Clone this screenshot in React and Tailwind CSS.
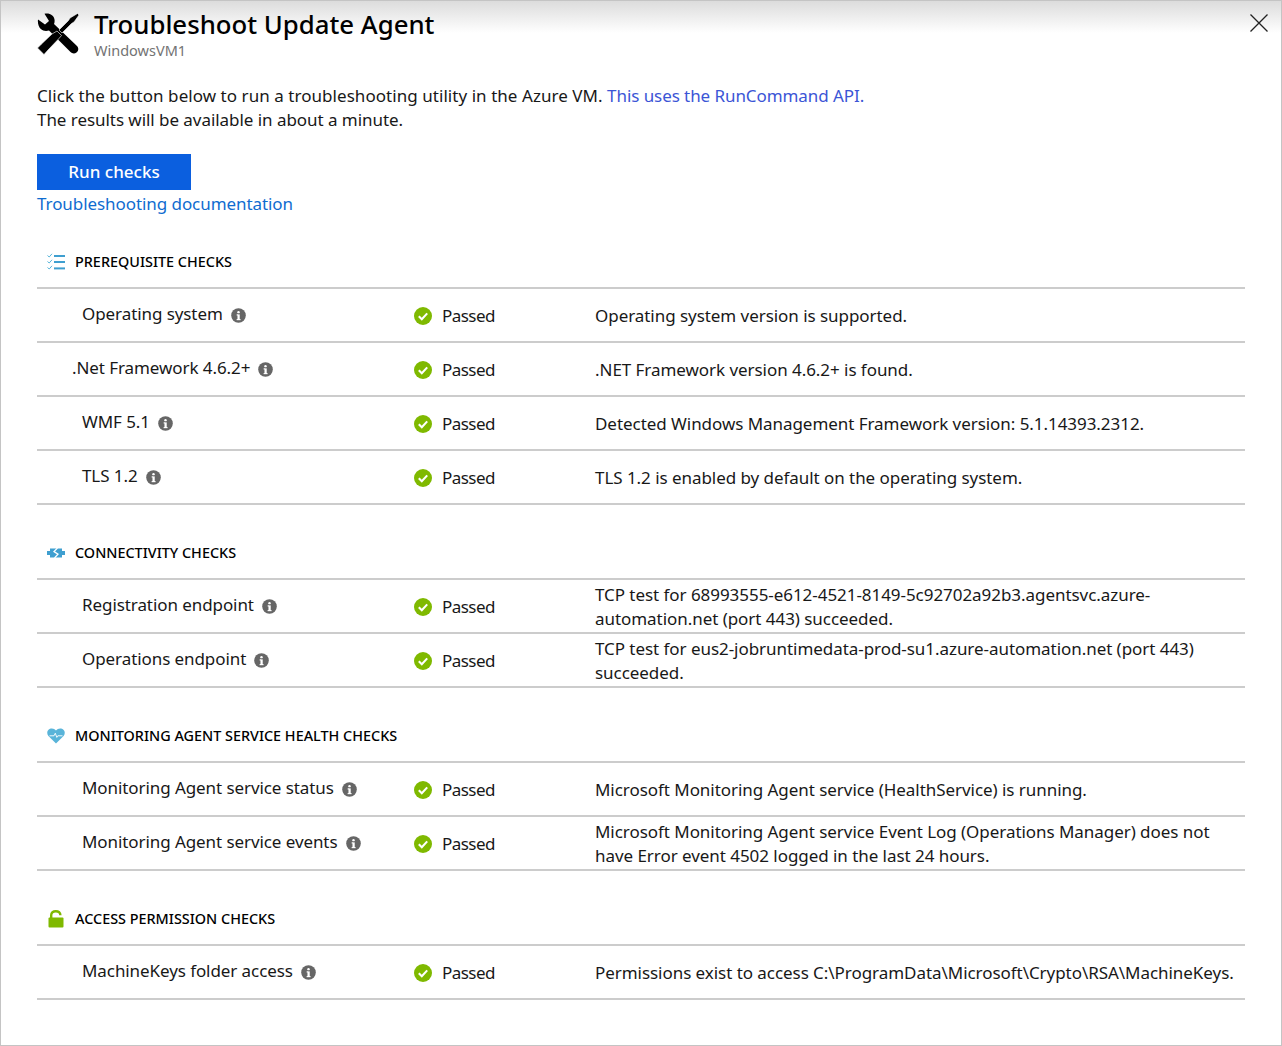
const Info = () => (
  <svg viewBox="0 0 16 16" className="w-[15px] h-[15px] shrink-0 ml-[8px] mt-[2px]">
    <circle cx="8" cy="8" r="7.8" fill="#666" />
    <rect x="6.9" y="6.8" width="2.4" height="6" fill="#fff" />
    <rect x="6" y="6.8" width="1.5" height="1.2" fill="#fff" />
    <rect x="6" y="11.8" width="4.2" height="1.2" fill="#fff" />
    <circle cx="8" cy="4.4" r="1.3" fill="#fff" />
  </svg>
);

const Check = () => (
  <svg viewBox="0 0 18 18" className="w-[18px] h-[18px] shrink-0">
    <circle cx="9" cy="9" r="9" fill="#7fb900" />
    <path d="M4.8 9.3 L7.8 12.2 L13.2 6.4" fill="none" stroke="#fff" strokeWidth="2.1" />
  </svg>
);

const ChecklistIcon = () => (
  <svg viewBox="0 0 18 18" className="w-[18px] h-[18px]">
    <g fill="none" stroke="#59b4d9" strokeWidth="1">
      <path d="M0.5 2.5 L2.2 4 L5 0.8" />
      <path d="M0.5 8.5 L2.2 10 L5 6.8" />
      <path d="M0.5 14.5 L2.2 16 L5 12.8" />
    </g>
    <g fill="#3f9fd0">
      <rect x="7" y="2" width="11" height="2" />
      <rect x="7" y="8" width="11" height="2" />
      <rect x="7" y="14.4" width="11" height="2" />
    </g>
  </svg>
);

const ConnectIcon = () => (
  <svg viewBox="0 0 18 10" className="w-[18px] h-[10px]">
    <path d="M0 3 H3 V0.5 H15 V3 H18 V7 H15 V9.5 H3 V7 H0 Z" fill="#3f9fd0" />
    <path d="M10.5 0 L7 3.6 L11 6.2 L7.5 10" fill="none" stroke="#fff" strokeWidth="1.3" />
  </svg>
);

const HeartIcon = () => (
  <svg viewBox="0 0 18 16" className="w-[18px] h-[16px]">
    <path d="M9 15.5 L1.4 8 C-0.6 5.6 0 1.8 3 0.7 C5.3 -0.1 7.6 0.6 9 2.6 C10.4 0.6 12.7 -0.1 15 0.7 C18 1.8 18.6 5.6 16.6 8 Z" fill="#59b4d9" />
    <path d="M2.5 7.8 H7 L8.3 5.2 L9.8 9.4 L10.8 7.8 H15.5" fill="none" stroke="#fff" strokeWidth="0.9" />
  </svg>
);

const LockIcon = () => (
  <svg viewBox="0 0 16 18" className="w-[16px] h-[18px] ml-[1px]">
    <path d="M3.2 8 V5.2 C3.2 2.6 5 1.2 7.8 1.2 C10.6 1.2 12.4 2.6 12.4 5.2" fill="none" stroke="#7fb900" strokeWidth="2.4" />
    <rect x="0.5" y="7.6" width="15" height="10" rx="1" fill="#7fb900" />
  </svg>
);

const Tools = () => (
  <svg viewBox="0 0 42 42" className="w-[42px] h-[42px] shrink-0">
    <path d="M1 6.5 L8 11.5 L12 8 L7.5 0.8 C12 -0.5 17 2 17.5 6.5 C17.8 8.5 17.5 10 17 11 L40 33 C42 35 41.5 38 39.5 39.5 C37.5 41 35 40.5 33.5 39 L12 17.5 C9 18.5 6 18 3.8 16 C1.5 14 0.5 10 1 6.5 Z" fill="#000" />
    <path d="M40.5 0.5 L42 2 L37 9 L34.5 10.5 L25 20 L22 17 L31.5 7.5 L33 5 Z" fill="#000" stroke="#fff" strokeWidth="0.6" />
    <path d="M20 18 L24.5 22.5 L21.5 26 L11 37 L7 41.5 L0.5 35 L4.5 31 L15 21 Z" fill="#000" stroke="#fff" strokeWidth="0.6" />
  </svg>
);

const Row = ({ name, nameClass = "pl-[45px]", msg }) => (
  <div className="grid grid-cols-[377px_181px_1fr] h-[54px] pt-[2px] border-b-2 border-[#cccccc] items-center">
    <div className={`flex items-center ${nameClass} -mt-[4px]`}>
      <span className="tracking-[-0.08px]">{name}</span>
      <Info />
    </div>
    <div className="flex items-center gap-[10px]">
      <Check />
      <span className="tracking-[-0.55px]">Passed</span>
    </div>
    <div className="leading-[24px] tracking-[-0.05px]">{msg}</div>
  </div>
);

const Section = ({ icon, title, className = "", children }) => (
  <section className={className}>
    <div className="flex items-center h-[28px] box-content pb-[11px] border-b-2 border-[#cccccc]">
      <div className="w-[38px] pl-[10px] flex items-center">{icon}</div>
      <h2 className="text-[14.4px] font-medium text-black">{title}</h2>
    </div>
    {children}
  </section>
);

export default function App() {
  return (
    <div
      className="w-[1282px] h-[1046px] box-border border border-[#c4c4c4] bg-[linear-gradient(to_bottom,#dcdcdc_0px,#ffffff_32px)] text-[#181818] text-[17px] leading-[24px] relative overflow-hidden px-[36px]"
      style={{ fontFamily: '"Noto Sans", sans-serif' }}
    >
      <button className="absolute top-[12px] right-[12px] w-[20px] h-[20px]" aria-label="Close">
        <svg viewBox="0 0 20 20" className="w-[20px] h-[20px]">
          <path d="M1.5 1.5 L18.5 18.5 M18.5 1.5 L1.5 18.5" stroke="#222" strokeWidth="1.3" fill="none" />
        </svg>
      </button>

      <header className="flex items-start pt-[12px]">
        <Tools />
        <div className="ml-[15px] -mt-[4px]">
          <h1 className="text-[25.75px] leading-[30px] font-medium text-black">Troubleshoot Update Agent</h1>
          <p className="text-[14.5px] leading-[20px] text-[#737373] mt-[1px]">WindowsVM1</p>
        </div>
      </header>

      <p className="mt-[24px]">
        <span className="tracking-[0.05px]">Click the button below to run a troubleshooting utility in the Azure VM.</span>{" "}
        <a className="text-[#3b55d6] tracking-[-0.07px]">This uses the RunCommand API.</a>
        <br />
        <span className="tracking-[-0.05px]">The results will be available in about a minute.</span>
      </p>

      <button className="block mt-[22px] w-[154px] h-[36px] bg-[#0b5fdf] text-white font-medium">Run checks</button>
      <a className="block mt-[2px] text-[#0f6cd0] tracking-[-0.07px]">Troubleshooting documentation</a>

      <Section icon={<ChecklistIcon />} title="PREREQUISITE CHECKS" className="mt-[32px]">
        <Row name="Operating system" msg="Operating system version is supported." />
        <Row name=".Net Framework 4.6.2+" nameClass="pl-[35px]" msg=".NET Framework version 4.6.2+ is found." />
        <Row name="WMF 5.1" msg="Detected Windows Management Framework version: 5.1.14393.2312." />
        <Row name="TLS 1.2" msg="TLS 1.2 is enabled by default on the operating system." />
      </Section>

      <Section icon={<ConnectIcon />} title="CONNECTIVITY CHECKS" className="mt-[34px]">
        <Row name="Registration endpoint" msg="TCP test for 68993555-e612-4521-8149-5c92702a92b3.agentsvc.azure-automation.net (port 443) succeeded." />
        <Row name="Operations endpoint" msg="TCP test for eus2-jobruntimedata-prod-su1.azure-automation.net (port 443) succeeded." />
      </Section>

      <Section icon={<HeartIcon />} title="MONITORING AGENT SERVICE HEALTH CHECKS" className="mt-[34px]">
        <Row name="Monitoring Agent service status" msg="Microsoft Monitoring Agent service (HealthService) is running." />
        <Row name="Monitoring Agent service events" msg="Microsoft Monitoring Agent service Event Log (Operations Manager) does not have Error event 4502 logged in the last 24 hours." />
      </Section>

      <Section icon={<LockIcon />} title="ACCESS PERMISSION CHECKS" className="mt-[34px]">
        <Row name="MachineKeys folder access" msg="Permissions exist to access C:\ProgramData\Microsoft\Crypto\RSA\MachineKeys." />
      </Section>
    </div>
  );
}
